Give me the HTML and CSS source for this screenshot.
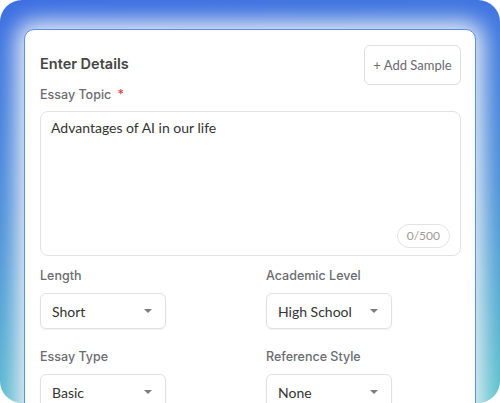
FILE: index.html
```html
<!DOCTYPE html>
<html>
<head>
<meta charset="utf-8">
<link rel="stylesheet" href="styles.css">
</head>
<body>
<div class="panel">
  <div class="card">
    <div class="header">
      <h2 class="title">Enter Details</h2>
      <button class="add-btn">+ Add Sample</button>
    </div>
    <label class="label">Essay Topic <span class="req">*</span></label>
    <div class="textarea">
      <div class="ta-text">Advantages of AI in our life</div>
      <div class="counter">0/500</div>
    </div>
    <div class="grid">
      <div class="field">
        <div class="label">Length</div>
        <div class="select"><span>Short</span><span class="caret"></span></div>
      </div>
      <div class="field">
        <div class="label">Academic Level</div>
        <div class="select"><span>High School</span><span class="caret"></span></div>
      </div>
      <div class="field">
        <div class="label">Essay Type</div>
        <div class="select"><span>Basic</span><span class="caret"></span></div>
      </div>
      <div class="field">
        <div class="label">Reference Style</div>
        <div class="select"><span>None</span><span class="caret"></span></div>
      </div>
    </div>
  </div>
</div>
</body>
</html>
```

FILE: styles.css
```css
* { box-sizing: border-box; }
html, body { margin: 0; padding: 0; background: #ffffff; }
body { font-family: Inter, "Open Sans", sans-serif; }
.panel {
  width: 500px;
  height: 403px;
  border-radius: 22px;
  overflow: hidden;
  background: linear-gradient(175deg, #3c6ee2 0%, #4a8fd9 50%, #5cc4cc 100%);
  padding: 29px 24px 0 24px;
}
.card {
  background: #ffffff;
  border: 1px solid #5a8fe8;
  border-radius: 10px;
  height: 420px;
  padding: 15px 14px 0 15px;
  box-shadow: 0 0 22px 8px rgba(236, 239, 246, 0.97);
}
.header {
  display: flex;
  justify-content: space-between;
  align-items: center;
  height: 40px;
}
.title {
  margin: 0;
  font-size: 14.5px;
  font-weight: 600;
  color: #454545;
  margin-top: -4px;
}
.add-btn {
  height: 40px;
  width: 97px;
  border: 1px solid #dedede;
  border-radius: 6px;
  background: #fff;
  font-family: Lato, Inter, sans-serif;
  font-size: 13px;
  color: #6a6a72;
  padding: 0;
}
.label {
  display: block;
  font-size: 12.5px;
  font-weight: 500;
  color: #6b6b72;
  line-height: 20px;
}
.req { color: #e53b3b; margin-left: 3px; }
.textarea {
  margin-top: 6px;
  height: 145px;
  border: 1px solid #e3e3e3;
  border-radius: 8px;
  display: flex;
  flex-direction: column;
  justify-content: space-between;
  padding: 7px 10px 7px 10px;
}
.ta-text { font-family: Lato, Inter, sans-serif; font-size: 14px; color: #333; line-height: 18px; }
.counter {
  align-self: flex-end;
  border: 1px solid #e3e3e3;
  border-radius: 12px;
  font-family: Lato, Inter, sans-serif;
  font-size: 12px;
  color: #9a9a9a;
  height: 24px;
  line-height: 22px;
  padding: 0 9px;
}
.grid {
  margin-top: 10px;
  display: grid;
  grid-template-columns: 195px 195px;
  column-gap: 31px;
  row-gap: 18px;
}
.field .label { margin-bottom: 7px; }
.select {
  width: 126px;
  height: 36px;
  border: 1px solid #e1e1e1;
  border-radius: 6px;
  box-shadow: 0 1px 2px rgba(0, 0, 0, 0.06);
  display: flex;
  align-items: center;
  justify-content: space-between;
  padding: 0 13px 0 11px;
  font-family: Lato, Inter, sans-serif;
  font-size: 14px;
  color: #333;
}
.caret {
  width: 0;
  height: 0;
  border-left: 4px solid transparent;
  border-right: 4px solid transparent;
  border-top: 4px solid #7d7d7d;
}
```
